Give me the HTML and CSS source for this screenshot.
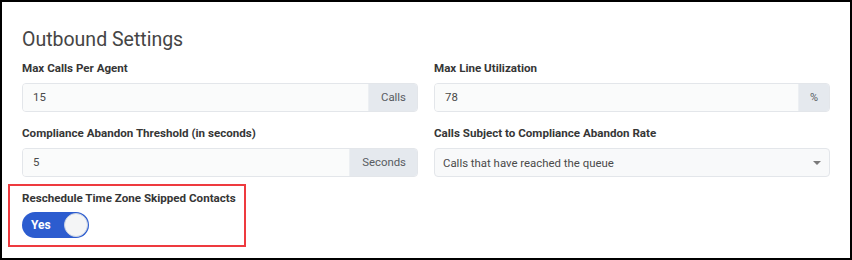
FILE: index.html
```html
<!DOCTYPE html>
<html>
<head>
<meta charset="utf-8">
<link rel="stylesheet" href="styles.css">
</head>
<body>
<div class="frame">
  <h2 class="title">Outbound Settings</h2>
  <div class="grid">
    <div class="field">
      <label class="label">Max Calls Per Agent</label>
      <div class="input-group">
        <div class="input">15</div>
        <div class="addon">Calls</div>
      </div>
    </div>
    <div class="field">
      <label class="label">Max Line Utilization</label>
      <div class="input-group">
        <div class="input">78</div>
        <div class="addon addon-pct">%</div>
      </div>
    </div>
    <div class="field">
      <label class="label">Compliance Abandon Threshold (in seconds)</label>
      <div class="input-group">
        <div class="input">5</div>
        <div class="addon">Seconds</div>
      </div>
    </div>
    <div class="field">
      <label class="label">Calls Subject to Compliance Abandon Rate</label>
      <div class="select">
        <span>Calls that have reached the queue</span>
        <span class="caret"></span>
      </div>
    </div>
  </div>
  <div class="highlight">
    <label class="label">Reschedule Time Zone Skipped Contacts</label>
    <div class="toggle">
      <span class="toggle-text">Yes</span>
      <span class="knob"></span>
    </div>
  </div>
</div>
</body>
</html>
```
FILE: styles.css
```css
* { box-sizing: border-box; }
html, body { margin: 0; padding: 0; background: #fff; }
body { font-family: Roboto, "Liberation Sans", sans-serif; }
.frame {
  width: 852px;
  height: 260px;
  border: 2px solid #000;
  padding: 26px 20px 0 20px;
  background: #fff;
}
.title {
  margin: 0;
  font-size: 19.5px;
  line-height: 24px;
  font-weight: 400;
  color: #454545;
}
.grid {
  margin-top: 8px;
  display: grid;
  grid-template-columns: 396px 396px;
  column-gap: 16px;
  row-gap: 13px;
}
.label {
  display: block;
  font-size: 11.6px;
  line-height: 16px;
  font-weight: 700;
  color: #363636;
  margin-bottom: 7px;
  white-space: nowrap;
}
.input-group {
  display: flex;
  height: 29px;
  border: 1px solid #e3e6ea;
  border-radius: 4px;
  overflow: hidden;
  background: #f8f9fa;
}
.input {
  flex: 1;
  padding-left: 10px;
  font-size: 11.4px;
  line-height: 27px;
  color: #4a4a4a;
  background: #fafbfb;
  border-right: 1px solid #eceff2;
}
.addon {
  padding: 0 11px 0 12px;
  font-size: 11.4px;
  line-height: 27px;
  color: #585c61;
  background: #e5e9ee;
}
.addon-pct { width: 30px; padding: 0; text-align: center; font-size: 11px; }
.select {
  display: flex;
  align-items: center;
  justify-content: space-between;
  height: 29px;
  padding: 0 8px 0 8px;
  border: 1px solid #e3e6ea;
  border-radius: 4px;
  background: #f8f9fa;
  font-size: 11.4px;
  color: #4a4a4a;
}
.caret {
  width: 0;
  height: 0;
  border-left: 4px solid transparent;
  border-right: 4px solid transparent;
  border-top: 4px solid #7a7a7a;
}
.highlight {
  width: 238px;
  margin: 7px 0 0 -14px;
  padding: 4px 0 7px 12px;
  border: 2px solid #ee3a3f;
}
.highlight .label { margin-bottom: 6px; }
.toggle {
  width: 67px;
  height: 26px;
  border-radius: 13px;
  background: #2c5ccf;
  display: flex;
  align-items: center;
  justify-content: space-between;
  padding: 0 1px 0 9px;
}
.toggle-text {
  color: #fff;
  font-weight: 700;
  font-size: 12px;
}
.knob {
  width: 24px;
  height: 24px;
  border-radius: 50%;
  background: #f4f5f6;
  border: 1px solid #c9d2e3;
}
```
